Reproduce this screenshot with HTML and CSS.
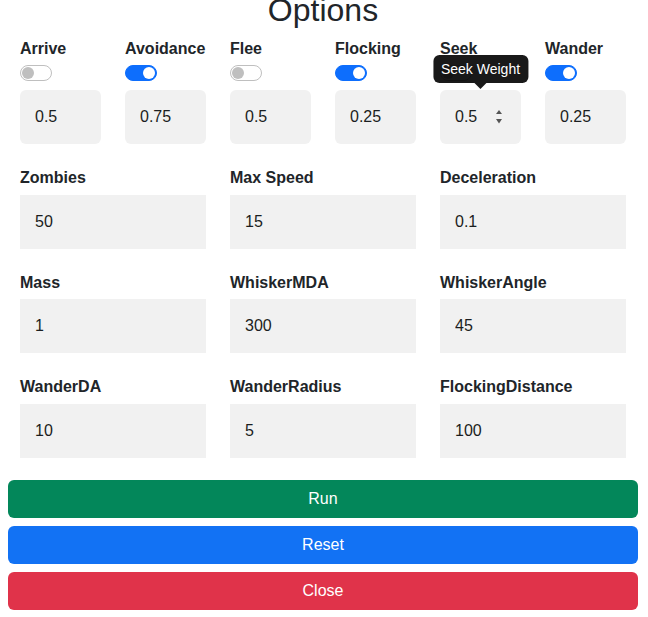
FILE: index.html
```html
<!DOCTYPE html>
<html lang="en">
<head>
<meta charset="utf-8">
<title>Options</title>
<link rel="stylesheet" href="styles.css">
</head>
<body>
<h1 class="title">Options</h1>
<div class="options">
  <div class="behaviours">
    <div class="cell">
      <label class="label">Arrive</label>
      <span class="switch"></span>
      <input class="field field-round" type="text" value="0.5">
    </div>
    <div class="cell">
      <label class="label">Avoidance</label>
      <span class="switch on"></span>
      <input class="field field-round" type="text" value="0.75">
    </div>
    <div class="cell">
      <label class="label">Flee</label>
      <span class="switch"></span>
      <input class="field field-round" type="text" value="0.5">
    </div>
    <div class="cell">
      <label class="label">Flocking</label>
      <span class="switch on"></span>
      <input class="field field-round" type="text" value="0.25">
    </div>
    <div class="cell">
      <label class="label">Seek</label>
      <span class="switch"></span>
      <div class="field-wrap">
        <input class="field field-round" type="text" value="0.5">
        <svg class="spinner" width="6" height="14" viewBox="0 0 6 14"><polygon points="0,4 3,0 6,4" fill="#555"/><polygon points="0,9 6,9 3,13.5" fill="#555"/></svg>
        <div class="tooltip">Seek Weight</div>
      </div>
    </div>
    <div class="cell">
      <label class="label">Wander</label>
      <span class="switch on"></span>
      <input class="field field-round" type="text" value="0.25">
    </div>
  </div>

  <div class="params">
    <div class="cell"><label class="label">Zombies</label><input class="field" type="text" value="50"></div>
    <div class="cell"><label class="label">Max Speed</label><input class="field" type="text" value="15"></div>
    <div class="cell"><label class="label">Deceleration</label><input class="field" type="text" value="0.1"></div>
    <div class="cell"><label class="label">Mass</label><input class="field" type="text" value="1"></div>
    <div class="cell"><label class="label">WhiskerMDA</label><input class="field" type="text" value="300"></div>
    <div class="cell"><label class="label">WhiskerAngle</label><input class="field" type="text" value="45"></div>
    <div class="cell"><label class="label">WanderDA</label><input class="field" type="text" value="10"></div>
    <div class="cell"><label class="label">WanderRadius</label><input class="field" type="text" value="5"></div>
    <div class="cell"><label class="label">FlockingDistance</label><input class="field" type="text" value="100"></div>
  </div>
</div>
<div class="actions">
  <button class="btn btn-run">Run</button>
  <button class="btn btn-reset">Reset</button>
  <button class="btn btn-close">Close</button>
</div>
</body>
</html>
```

FILE: styles.css
```css
html, body {
  background: #fff;
}
body {
  margin: 0 10px 0 8px;
  font-family: "Liberation Sans", Arial, sans-serif;
  color: #212529;
  font-size: 16px;
  line-height: 1.5;
}
.title {
  margin: -9px 0 0;
  font-size: 32px;
  font-weight: 400;
  line-height: 1.2;
  text-align: center;
  color: #212529;
}
.options {
  padding: 0 12px;
}
.behaviours {
  margin-top: 8px;
  display: grid;
  grid-template-columns: repeat(6, 81px);
  column-gap: 24px;
  margin-bottom: 22px;
}
.params {
  display: grid;
  grid-template-columns: repeat(3, 186px);
  column-gap: 24px;
  row-gap: 22px;
}
.cell {
  display: flex;
  flex-direction: column;
}
.label {
  display: block;
  font-weight: 700;
  line-height: 24px;
  height: 24px;
  white-space: nowrap;
}
.params .label {
  margin-bottom: 4.5px;
}
.switch {
  position: relative;
  display: block;
  width: 32px;
  height: 16px;
  box-sizing: border-box;
  margin-top: 4px;
  margin-bottom: 9px;
  border: 1px solid #bfbfbf;
  border-radius: 8px;
  background: #fff;
}
.switch::after {
  content: "";
  position: absolute;
  top: 1px;
  left: 1px;
  width: 12px;
  height: 12px;
  border-radius: 50%;
  background: #bfbfbf;
}
.switch.on {
  background: #0d6efd;
  border-color: #0d6efd;
}
.switch.on::after {
  left: auto;
  right: 1px;
  background: #fff;
}
.field {
  display: block;
  width: 100%;
  height: 54px;
  box-sizing: border-box;
  padding: 15px;
  margin: 0;
  border: 0;
  outline: none;
  background: #f1f1f1;
  font-family: "Liberation Sans", Arial, sans-serif;
  font-size: 16px;
  line-height: 24px;
  color: #1b1e21;
  border-radius: 0;
}
.field-round {
  border-radius: 6px;
}
.field-wrap {
  position: relative;
}
.spinner {
  position: absolute;
  right: 19px;
  top: 20px;
}
.tooltip {
  position: absolute;
  left: 50%;
  bottom: calc(100% + 7px);
  transform: translateX(-50%);
  padding: 4px 8px;
  font-size: 14px;
  line-height: 20px;
  color: #fff;
  background: rgba(0, 0, 0, 0.9);
  border-radius: 6px;
  white-space: nowrap;
}
.tooltip::after {
  content: "";
  position: absolute;
  top: 100%;
  left: 50%;
  margin-left: -6px;
  border-style: solid;
  border-width: 6px 6px 0 6px;
  border-color: rgba(0, 0, 0, 0.9) transparent transparent transparent;
}
.actions {
  margin-top: 22px;
  display: flex;
  flex-direction: column;
  gap: 8px;
}
.btn {
  display: block;
  width: 100%;
  height: 38px;
  border: 0;
  border-radius: 6px;
  color: #fff;
  font-family: "Liberation Sans", Arial, sans-serif;
  font-size: 16px;
  line-height: 24px;
  padding: 7px 12px;
}
.btn-run {
  background: #03875a;
}
.btn-reset {
  background: #1272f4;
}
.btn-close {
  background: #e0334a;
}
```
